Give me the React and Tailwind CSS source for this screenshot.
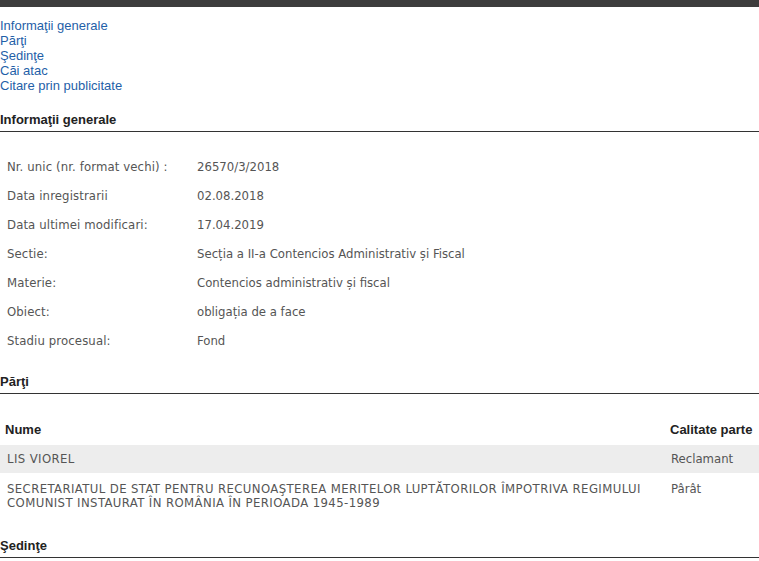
import React from 'react';

const links = ['Informaţii generale', 'Părţi', 'Şedinţe', 'Căi atac', 'Citare prin publicitate'];

const info = [
  ['Nr. unic (nr. format vechi) :', '26570/3/2018'],
  ['Data inregistrarii', '02.08.2018'],
  ['Data ultimei modificari:', '17.04.2019'],
  ['Sectie:', 'Secția a II-a Contencios Administrativ și Fiscal'],
  ['Materie:', 'Contencios administrativ și fiscal'],
  ['Obiect:', 'obligația de a face'],
  ['Stadiu procesual:', 'Fond'],
];

const parti = [
  ['LIS VIOREL', 'Reclamant'],
  ['SECRETARIATUL DE STAT PENTRU RECUNOAŞTEREA MERITELOR LUPTĂTORILOR ÎMPOTRIVA REGIMULUI COMUNIST INSTAURAT ÎN ROMÂNIA ÎN PERIOADA 1945-1989', 'Pârât'],
];

const SectionTitle = ({ children, className = '' }) => (
  <div className={`border-b border-[#333] pb-[4px] text-[13px] font-bold leading-[15px] text-[#222] ${className}`}>
    {children}
  </div>
);

export default function App() {
  const body = { fontFamily: '"DejaVu Sans Condensed", "DejaVu Sans", sans-serif' };
  return (
    <div className="h-[561px] w-[759px] overflow-hidden bg-white" style={{ fontFamily: '"Liberation Sans", Arial, sans-serif' }}>
      <div className="h-[7px] bg-[#3d3d3d]" />

      <nav className="mt-[11px] flex flex-col text-[13px] leading-[15px] text-[#1f5fa8]">
        {links.map(l => (
          <a key={l} href="#" className="w-fit">{l}</a>
        ))}
      </nav>

      <SectionTitle className="mt-[19px]">Informaţii generale</SectionTitle>

      <div className="mt-[20px] text-[13px] leading-[15px] text-[#555]" style={body}>
        {info.map(([k, v]) => (
          <div key={k} className="flex h-[29px] items-center pl-[7px]">
            <div className="w-[190px] shrink-0 tracking-[0.12px]">{k}</div>
            <div>{v}</div>
          </div>
        ))}
      </div>

      <SectionTitle className="mt-[19px]">Părţi</SectionTitle>

      <div className="mt-[21px]">
        <div className="flex h-[30px] items-center text-[13px] font-bold text-[#222]">
          <div className="flex-1 pl-[5px]">Nume</div>
          <div className="w-[89px]">Calitate parte</div>
        </div>
        {parti.map(([n, c], i) => (
          <div key={n} className={`flex text-[13px] leading-[14px] text-[#555] ${i % 2 === 0 ? 'bg-[#ededed] py-[7px]' : 'pt-[9px] pb-[17px]'}`} style={body}>
            <div className="flex-1 pl-[7px] pr-[20px] tracking-[0.4px]">{n}</div>
            <div className="w-[88px]">{c}</div>
          </div>
        ))}
      </div>

      <SectionTitle className="mt-[11px]">Şedinţe</SectionTitle>
    </div>
  );
}
